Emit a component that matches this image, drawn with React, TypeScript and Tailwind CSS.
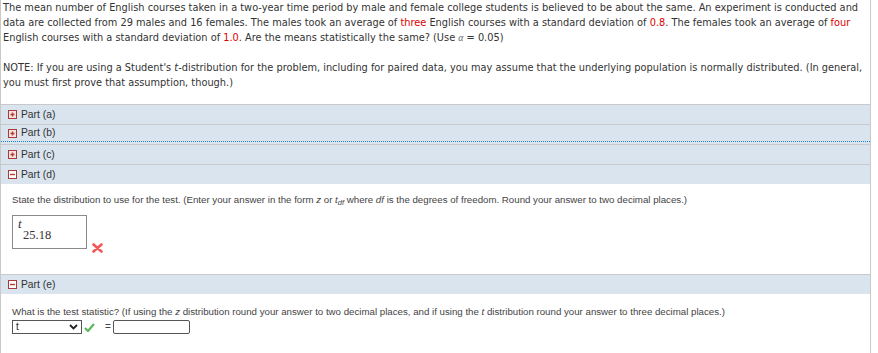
import React from "react";

function PlusBox() {
  return (
    <svg width="9" height="9" viewBox="0 0 9 9" className="shrink-0">
      <rect x="0.5" y="0.5" width="8" height="8" fill="#f6e4e4" stroke="#a83a3a" />
      <path d="M4.5 2.5v4M2.5 4.5h4" stroke="#c0392b" strokeWidth="1.4" />
    </svg>
  );
}

function MinusBox() {
  return (
    <svg width="9" height="9" viewBox="0 0 9 9" className="shrink-0">
      <rect x="0.5" y="0.5" width="8" height="8" fill="#fff" stroke="#a83a3a" />
      <path d="M2 4.5h5" stroke="#c0392b" strokeWidth="1.4" />
    </svg>
  );
}

function PartHeader({ label, open, focused }: { label: string; open?: boolean; focused?: boolean }) {
  return (
    <div className="h-[20px] border-t border-[#c9c9c9] bg-[#d9e4ee]">
      <div
        className={
          focused
            ? "flex h-[17px] items-center gap-[4px] border-b border-dotted border-[#1f7fd1] pl-[7px]"
            : "flex h-[19px] items-center gap-[4px] pl-[7px]"
        }
      >
        {open ? <MinusBox /> : <PlusBox />}
        <span className="font-['Liberation_Sans',Arial,sans-serif] text-[10.3px] text-[#333]">{label}</span>
      </div>
    </div>
  );
}

export default function App() {
  return (
    <div className="min-h-[353px] w-[871px] border-x border-[#c9c9c9] bg-white">
      <div className="pl-[2px] font-['DejaVu_Sans',Verdana,sans-serif] text-[9.8px] leading-[15px] text-[#333]">
        <p>
          The mean number of English courses taken in a two-year time period by male and female college students is
          believed to be about the same. An experiment is conducted and data are collected from 29 males and 16 females.
          The males took an average of <span className="text-[#e00000]">three</span> English courses with a standard
          deviation of <span className="text-[#e00000]">0.8</span>. The females took an average of{" "}
          <span className="text-[#e00000]">four</span> English courses with a standard deviation of{" "}
          <span className="text-[#e00000]">1.0</span>. Are the means statistically the same? (Use{" "}
          <span className="font-['Liberation_Serif',serif] italic text-[#666]">α</span> = 0.05)
        </p>
        <p className="mt-[15px]">
          NOTE: If you are using a Student's <span className="italic">t</span>-distribution for the problem, including
          for paired data, you may assume that the underlying population is normally distributed. (In general, you must
          first prove that assumption, though.)
        </p>
      </div>

      <div className="mt-[14px]">
        <PartHeader label="Part (a)" />
        <PartHeader label="Part (b)" focused />
        <PartHeader label="Part (c)" />
        <PartHeader label="Part (d)" open />
      </div>

      <div className="px-[11px] pt-[10px] font-['Liberation_Sans',Arial,sans-serif] text-[9.7px] leading-[12px] text-[#444]">
        <p>
          State the distribution to use for the test. (Enter your answer in the form <span className="italic">z</span> or{" "}
          <span className="italic">
            t<sub className="text-[7.5px]">df</sub>
          </span>{" "}
          where <span className="italic">df</span> is the degrees of freedom. Round your answer to two decimal places.)
        </p>
        <div className="mt-[9px] flex items-start gap-[5px]">
          <div className="h-[34px] w-[75px] border border-[#8a8a8a] pl-[5px] pt-[2px] font-['Liberation_Serif',serif] text-[#333]">
            <div className="text-[13px] italic leading-[11px]">t</div>
            <div className="ml-[5px] text-[12.5px] leading-[13px]">25.18</div>
          </div>
          <svg width="11" height="10" viewBox="0 0 11 10" className="mt-[28px]">
            <path d="M1.5 1.5l8 7M9.5 1.5l-8 7" stroke="#f25757" strokeWidth="2.6" strokeLinecap="round" />
          </svg>
        </div>
      </div>

      <div className="mt-[21px]">
        <PartHeader label="Part (e)" open />
      </div>

      <div className="px-[11px] pt-[12px] font-['Liberation_Sans',Arial,sans-serif] text-[9.7px] leading-[12px] text-[#444]">
        <p>
          What is the test statistic? (If using the <span className="italic">z</span> distribution round your answer to
          two decimal places, and if using the <span className="italic">t</span> distribution round your answer to three
          decimal places.)
        </p>
        <div className="mt-[2px] flex items-center">
          <div className="flex h-[14px] w-[70px] items-center justify-between border border-[#555] px-[3px]">
            <span className="text-[10px] leading-none text-[#222]">t</span>
            <svg width="9" height="6" viewBox="0 0 9 6">
              <path d="M1 1l3.5 3.5L8 1" fill="none" stroke="#222" strokeWidth="1.8" />
            </svg>
          </div>
          <svg width="11" height="9" viewBox="0 0 11 9" className="ml-[2px]">
            <path d="M1 5l3 3 6-7" fill="none" stroke="#5cb85c" strokeWidth="2.2" />
          </svg>
          <span className="ml-[10px] text-[10px] text-[#444]">=</span>
          <div className="ml-[2px] h-[14px] w-[77px] rounded-[2px] border border-[#555]" />
        </div>
      </div>
    </div>
  );
}
